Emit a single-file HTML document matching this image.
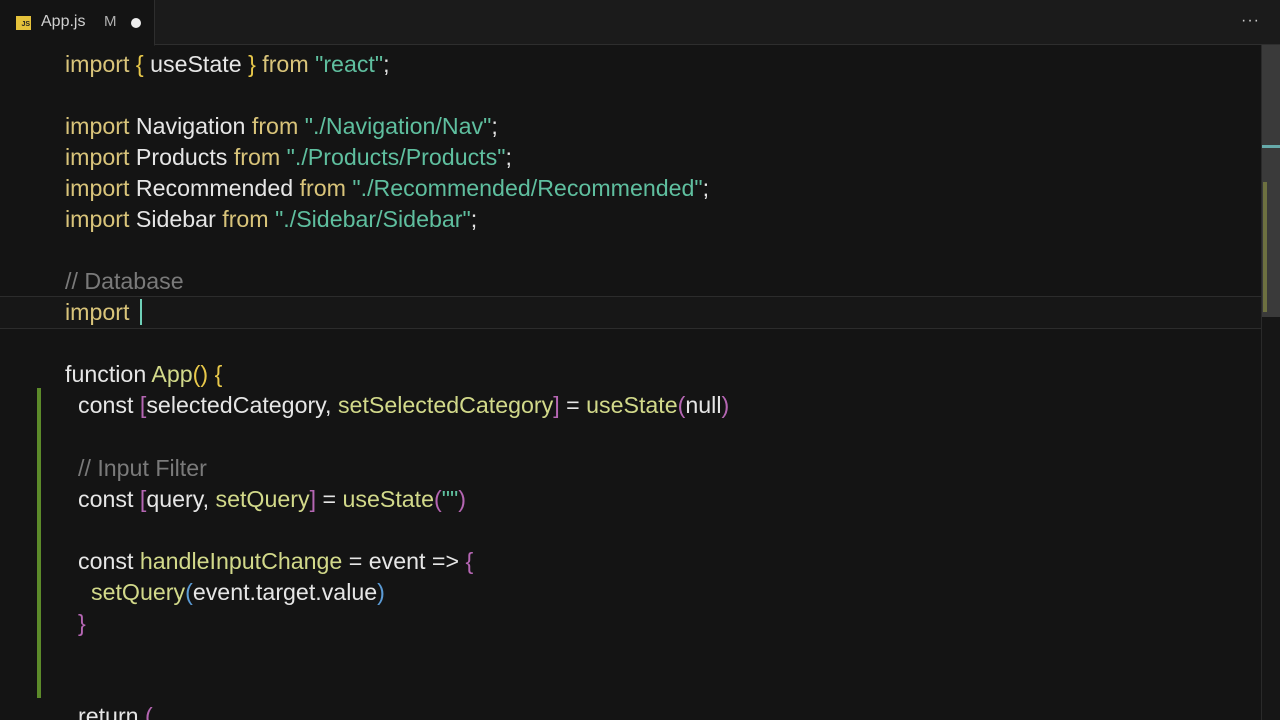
<!DOCTYPE html>
<html style="overflow:hidden;height:720px"><head><meta charset="utf-8"><style>
body{margin:0;width:1280px;height:720px;background:#141414;overflow:hidden;position:relative;font-family:"Liberation Sans",sans-serif}
.tabbar{position:absolute;left:0;top:0;width:1280px;height:44px;background:#1b1b1b;border-bottom:1px solid #2e2e2e}
.tab{position:absolute;left:0;top:0;width:154px;height:45px;background:#141414;border-right:1px solid #2e2e2e;border-bottom:1px solid #141414}
.js{position:absolute;left:16px;top:16px;width:15px;height:14px;background:#e5c23b;color:#222;font-size:7px;font-weight:bold;text-align:right;line-height:18px;padding-right:1px;box-sizing:border-box}
.tabt{position:absolute;left:41px;top:13px;font-size:16px;color:#d0d0d0}
.m{position:absolute;left:104px;top:13px;font-size:15px;color:#b0b0b0}
.dot{position:absolute;left:131px;top:18px;width:10px;height:10px;border-radius:50%;background:#eee}
.more{position:absolute;left:1241px;top:12px;color:#ccc;font-size:16px;letter-spacing:1px}
.code{position:absolute;left:0;top:2px;font-size:23.2px;color:#e6e6e6;white-space:pre}
.l{position:absolute;left:65px;height:31px;line-height:31px}
.k{color:#d9c47a}.s{color:#5fbf9f}.c{color:#7a7a7a}.f{color:#d2d98a}.p{color:#b566b3}.y{color:#e8c84a}.b{color:#5b9bd5}
.cur{position:absolute;left:0;top:296px;width:1262px;height:31px;border-top:1px solid #2c2c2c;border-bottom:1px solid #2c2c2c;background:#171717}
.caret{position:absolute;left:140px;top:299px;width:2px;height:26px;background:#6fd0b8}
.gbar{position:absolute;left:37px;top:388px;width:4px;height:310px;background:#5c8a2a}
.sb{position:absolute;left:1261px;top:45px;width:19px;height:675px;background:#161616;border-left:1px solid #2a2a2a}
.sl{position:absolute;left:1262px;top:45px;width:18px;height:272px;background:#3a3a3a}
.mk{position:absolute;left:1262px;top:145px;width:18px;height:3px;background:#6aa}
.mk2{position:absolute;left:1263px;top:182px;width:4px;height:130px;background:#6d7040}
</style></head><body>
<div class="tabbar"></div>
<div class="tab"><div class="js">JS</div><div class="tabt">App.js</div><div class="m">M</div><div class="dot"></div></div>
<div class="more">···</div>
<div class="cur"></div>
<div class="gbar"></div>
<div class="sb"></div><div class="sl"></div><div class="mk"></div><div class="mk2"></div>
<div class="code">
<div class="l" style="top:47px"><span class="k">import</span> <span class="y">{</span> useState <span class="y">}</span> <span class="k">from</span> <span class="s">"react"</span>;</div>
<div class="l" style="top:109px"><span class="k">import</span> Navigation <span class="k">from</span> <span class="s">"./Navigation/Nav"</span>;</div>
<div class="l" style="top:140px"><span class="k">import</span> Products <span class="k">from</span> <span class="s">"./Products/Products"</span>;</div>
<div class="l" style="top:171px"><span class="k">import</span> Recommended <span class="k">from</span> <span class="s">"./Recommended/Recommended"</span>;</div>
<div class="l" style="top:202px"><span class="k">import</span> Sidebar <span class="k">from</span> <span class="s">"./Sidebar/Sidebar"</span>;</div>
<div class="l" style="top:264px"><span class="c">// Database</span></div>
<div class="l" style="top:295px"><span class="k">import</span></div>
<div class="l" style="top:357px">function <span class="f">App</span><span class="y">()</span> <span class="y">{</span></div>
<div class="l" style="top:388px;left:78px">const <span class="p">[</span>selectedCategory, <span class="f">setSelectedCategory</span><span class="p">]</span> = <span class="f">useState</span><span class="p">(</span>null<span class="p">)</span></div>
<div class="l" style="top:451px;left:78px"><span class="c">// Input Filter</span></div>
<div class="l" style="top:482px;left:78px">const <span class="p">[</span>query, <span class="f">setQuery</span><span class="p">]</span> = <span class="f">useState</span><span class="p">(</span><span class="s">""</span><span class="p">)</span></div>
<div class="l" style="top:544px;left:78px">const <span class="f">handleInputChange</span> = event =&gt; <span class="p">{</span></div>
<div class="l" style="top:575px;left:91px"><span class="f">setQuery</span><span class="b">(</span>event.target.value<span class="b">)</span></div>
<div class="l" style="top:606px;left:78px"><span class="p">}</span></div>
<div class="l" style="top:699px;left:78px">return <span class="p">(</span></div>
</div>
<div class="caret"></div>
</body></html>
